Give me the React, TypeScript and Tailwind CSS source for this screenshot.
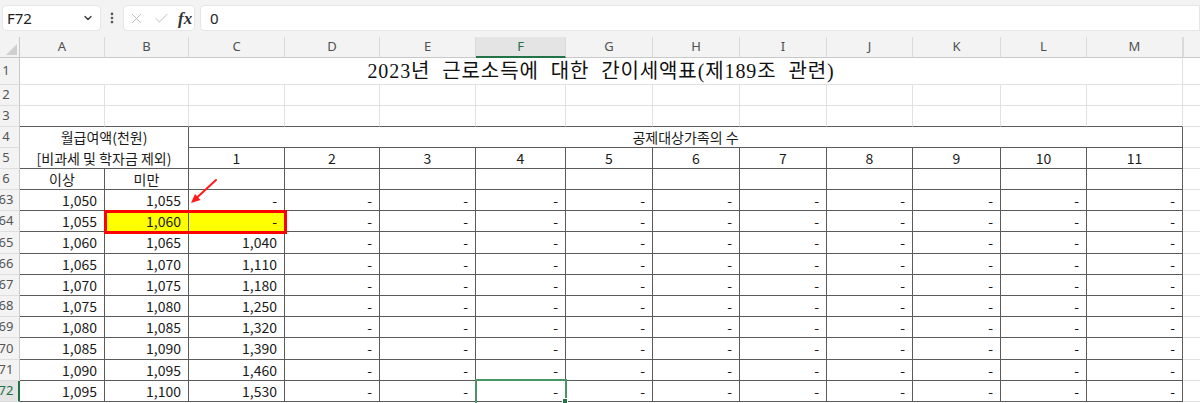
import React from "react";
import { ChevronDown, X, Check, EllipsisVertical } from "lucide-react";

const COLS = ["A", "B", "C", "D", "E", "F", "G", "H", "I", "J", "K", "L", "M"];

const LIGHT = "border-r border-b border-r-[#e1e1e1] border-b-[#e1e1e1]";
const DARK = "border-r border-b border-r-[#5b5b5b] border-b-[#5b5b5b]";
const TOPEDGE = "border-r border-b border-r-[#e1e1e1] border-b-[#5b5b5b]";
const EXTRA = "border-b border-b-[#e1e1e1]";

const data: [number, string, string, string][] = [
  [63, "1,050", "1,055", "-"],
  [64, "1,055", "1,060", "-"],
  [65, "1,060", "1,065", "1,040"],
  [66, "1,065", "1,070", "1,110"],
  [67, "1,070", "1,075", "1,180"],
  [68, "1,075", "1,080", "1,250"],
  [69, "1,080", "1,085", "1,320"],
  [70, "1,085", "1,090", "1,390"],
  [71, "1,090", "1,095", "1,460"],
  [72, "1,095", "1,100", "1,530"],
];

function Cell({ cls, children }: { cls: string; children?: React.ReactNode }) {
  return <div className={"flex items-center overflow-hidden whitespace-nowrap " + cls}>{children}</div>;
}

function RowHead({ label, active = false }: { label: string; active?: boolean }) {
  return (
    <div
      className={
        "flex items-center overflow-hidden text-[13px] font-['Noto_Sans',sans-serif] border-b border-b-[#dedede] " +
        (active
          ? "bg-[#e4e4e4] text-[#217346] border-r-2 border-r-[#217346]"
          : "bg-[#f3f3f3] text-[#555] border-r border-r-[#c8c8c8]")
      }
    >
      <span className="w-[12px] flex justify-center whitespace-nowrap">{label}</span>
    </div>
  );
}

export default function App() {
  const cells: React.ReactNode[] = [];
  let k = 0;
  const push = (n: React.ReactNode) => cells.push(<React.Fragment key={k++}>{n}</React.Fragment>);

  // column headers
  push(
    <div className="relative bg-[#f3f3f3] border-r border-b border-r-[#c8c8c8] border-b-[#c8c8c8]">
      <svg className="absolute left-0 top-0" width="20" height="21" viewBox="0 0 20 21">
        <polygon points="17,7 17,18 6,18" fill="#cfcfcf" />
      </svg>
    </div>
  );
  COLS.forEach((c) =>
    push(
      <div
        className={
          "flex items-center justify-center text-[13px] font-['Noto_Sans',sans-serif] border-r border-r-[#dadada] " +
          (c === "F"
            ? "bg-[#e4e4e4] text-[#217346] border-b-2 border-b-[#217346]"
            : "bg-[#f3f3f3] text-[#505050] border-b border-b-[#c8c8c8]")
        }
      >
        {c}
      </div>
    )
  );
  push(<div className="bg-[#f3f3f3] border-b border-b-[#c8c8c8] border-l border-l-[#dadada]" />);

  // row 1 title
  push(<RowHead label="1" />);
  push(
    <Cell cls={"col-span-13 justify-center text-[20px] tracking-[0.9px] [word-spacing:6px] text-[#111] font-['Liberation_Serif','Noto_Sans_CJK_KR',serif] " + LIGHT}>
      2023년 근로소득에 대한 간이세액표(제189조 관련)
    </Cell>
  );
  push(<Cell cls={EXTRA} />);

  // rows 2, 3
  ["2", "3"].forEach((r) => {
    push(<RowHead label={r} />);
    COLS.forEach(() => push(<Cell cls={r === "3" ? TOPEDGE : LIGHT} />));
    push(<Cell cls={EXTRA} />);
  });

  // row 4
  push(<RowHead label="4" />);
  push(
    <div className={"col-span-2 row-span-2 flex flex-col items-center whitespace-nowrap " + DARK}>
      <div className="h-[21px] flex items-center">월급여액(천원)</div>
      <div className="h-[20px] flex items-center">[비과세 및 학자금 제외)</div>
    </div>
  );
  push(<Cell cls={"col-span-11 justify-center " + DARK}>공제대상가족의 수</Cell>);
  push(<Cell cls={EXTRA} />);

  // row 5
  push(<RowHead label="5" />);
  for (let i = 1; i <= 11; i++) push(<Cell cls={"justify-center " + DARK}>{i}</Cell>);
  push(<Cell cls={EXTRA} />);

  // row 6
  push(<RowHead label="6" />);
  push(<Cell cls={"justify-center " + DARK}>이상</Cell>);
  push(<Cell cls={"justify-center " + DARK}>미만</Cell>);
  for (let i = 0; i < 11; i++) push(<Cell cls={DARK} />);
  push(<Cell cls={EXTRA} />);

  // data rows
  data.forEach(([r, a, b, c]) => {
    push(<RowHead label={String(r)} active={r === 72} />);
    push(<Cell cls={"justify-end pr-[7px] " + DARK}>{a}</Cell>);
    push(<Cell cls={"justify-end pr-[7px] " + DARK + (r === 64 ? " bg-[#ffff00]" : "")}>{b}</Cell>);
    push(<Cell cls={"justify-end pr-[7px] " + DARK + (r === 64 ? " bg-[#ffff00]" : "")}>{c}</Cell>);
    for (let i = 0; i < 10; i++) push(<Cell cls={"justify-end pr-[7px] " + DARK}>-</Cell>);
    push(<Cell cls={EXTRA} />);
  });

  return (
    <div className="w-[1200px] h-[403px] overflow-hidden bg-white flex flex-col font-['Noto_Sans_CJK_KR','Noto_Sans',sans-serif] text-[14px] text-[#1a1a1a]">
      {/* formula bar */}
      <div className="h-[37px] shrink-0 bg-[#f3f3f3] flex items-start pt-[5px] pl-[2px]">
        <div className="w-[99px] h-[26px] bg-white rounded-[4px] border border-[#e6e6e6] flex items-center justify-between pl-[4px] pr-[6px]">
          <span className="text-[15px] text-[#222] font-['Noto_Sans',sans-serif]">F72</span>
          <ChevronDown size={12} strokeWidth={2.6} className="text-[#333]" />
        </div>
        <div className="w-[22px] h-[26px] flex items-center justify-center">
          <EllipsisVertical size={14} strokeWidth={2.6} className="text-[#555]" />
        </div>
        <div className="w-[72px] h-[26px] bg-white rounded-[4px] border border-[#e6e6e6] flex items-center pl-[4px] gap-[8px]">
          <X size={17} strokeWidth={1.2} className="text-[#b5b5b5]" />
          <Check size={17} strokeWidth={1.2} className="text-[#b5b5b5]" />
          <span className="text-[17px] italic font-bold text-[#333] font-['Liberation_Serif',serif] leading-none">fx</span>
        </div>
        <div className="ml-[5px] flex-1 h-[26px] bg-white rounded-l-[4px] border border-[#e6e6e6] flex items-center pl-[9px]">
          <span className="text-[15px] text-[#222] font-['Noto_Sans',sans-serif]">0</span>
        </div>
      </div>

      {/* sheet */}
      <div className="relative flex-1">
        <div className="grid grid-cols-[20px_85px_84px_96px_95px_96px_90px_87px_87px_87px_86px_88px_86px_96px_1fr] grid-rows-[21px_27px_21px_21px_21px_21px_21px_21px_21px_22px_21px_21px_21px_21px_22px_21px_21px]">
          {cells}
        </div>

        {/* red highlight box */}
        <div className="absolute left-[104px] top-[173px] w-[183px] h-[24px] border-[3px] border-[#ff0000] pointer-events-none" />

        {/* red arrow */}
        <svg className="absolute left-0 top-0 pointer-events-none" width="300" height="200" viewBox="0 0 300 200">
          <line x1="216" y1="143" x2="197" y2="160.5" stroke="#ff1a1a" strokeWidth="2" strokeLinecap="round" />
          <polygon points="191,166 200.5,163 195,157" fill="#ff1a1a" />
        </svg>

        {/* selected cell F72 */}
        <div className="absolute left-[475px] top-[342px] w-[92px] h-[26px] border-2 border-[#4a9467] pointer-events-none" />
        <div className="absolute left-[562px] top-[361px] w-[6px] h-[6px] bg-[#217346] border border-white pointer-events-none" />
      </div>
    </div>
  );
}
